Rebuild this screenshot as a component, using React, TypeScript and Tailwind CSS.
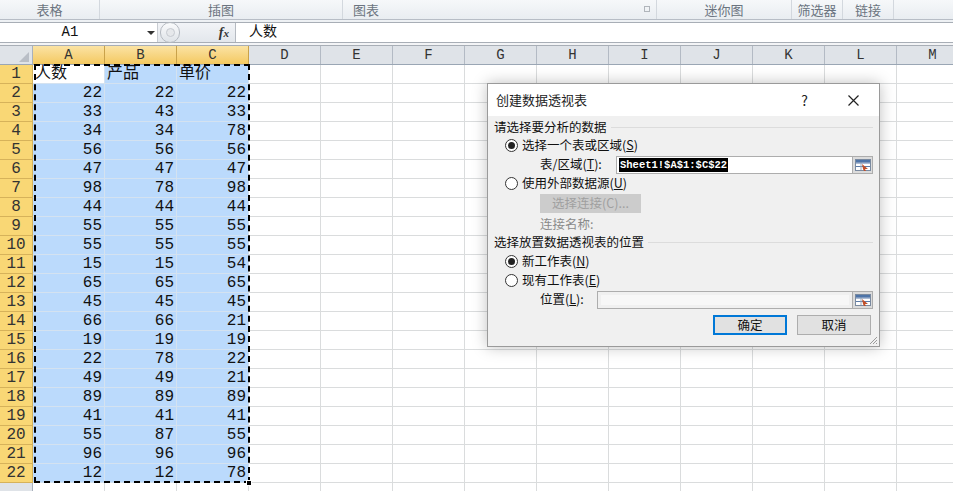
import React from 'react'

const cols = ['A', 'B', 'C', 'D', 'E', 'F', 'G', 'H', 'I', 'J', 'K', 'L', 'M']
const data: number[][] = [
  [22, 22, 22], [33, 43, 33], [34, 34, 78], [56, 56, 56], [47, 47, 47], [98, 78, 98],
  [44, 44, 44], [55, 55, 55], [55, 55, 55], [15, 15, 54], [65, 65, 65], [45, 45, 45],
  [66, 66, 21], [19, 19, 19], [22, 78, 22], [49, 49, 21], [89, 89, 89], [41, 41, 41],
  [55, 87, 55], [96, 96, 96], [12, 12, 78],
]
const cellFont = { fontFamily: '"Liberation Mono", "Noto Sans CJK SC", monospace' }
const uiFont = { fontFamily: '"Noto Sans CJK SC", "Noto Sans", sans-serif' }

const Radio = ({ on }: { on?: boolean }) => (
  <span className="w-[13px] h-[13px] rounded-full border border-[#333] bg-white flex items-center justify-center shrink-0">
    {on && <span className="w-[7px] h-[7px] rounded-full bg-[#222]" />}
  </span>
)

const PickBtn = () => (
  <div className="w-[20px] h-full bg-[#dcdcdc] border-l border-[#adadad] flex items-center justify-center">
    <svg width="16" height="12" viewBox="0 0 16 12">
      <rect x="0.5" y="0.5" width="15" height="11" fill="#fff" stroke="#7a8aa0" />
      <line x1="1" y1="4" x2="15" y2="4" stroke="#5c7ba8" />
      <line x1="1" y1="7.5" x2="15" y2="7.5" stroke="#5c7ba8" />
      <line x1="6" y1="1" x2="6" y2="11" stroke="#9aa8ba" />
      <rect x="1" y="1" width="14" height="2.5" fill="#4e74a8" />
      <path d="M7 5 L13 10 L10 10 L11 12 L9 12 L8 10 Z" fill="#c0502a" />
    </svg>
  </div>
)

const Header = () => (
  <div className="flex h-[19px] border-b border-[#9aa6b4]">
    <div className="w-[33px] shrink-0 bg-[#dfe3e8] border-r border-[#a9b1bc] relative">
      <svg className="absolute right-[3px] bottom-[2px]" width="10" height="10" viewBox="0 0 10 10">
        <path d="M10 0 L10 10 L0 10 Z" fill="#b9bec6" />
      </svg>
    </div>
    {cols.map((c, i) => (
      <div
        key={c}
        className={`w-[72px] shrink-0 flex items-center justify-center text-[14px] border-r ${
          i < 3
            ? 'bg-gradient-to-b from-[#fbe3a3] to-[#f4c95f] border-[#c9a24a] text-[#333]'
            : 'bg-[#dfe3e8] border-[#b3bac4] text-[#333]'
        }`}
        style={cellFont}
      >
        {c}
      </div>
    ))}
  </div>
)

export default function App() {
  const rows = [[0, 0, 0] as (number | string)[], ...data]
  return (
    <div className="w-[953px] h-[491px] overflow-hidden bg-white relative" style={uiFont}>
      {/* ribbon group labels */}
      <div className="flex h-[20px] bg-gradient-to-b from-[#f6f8fa] to-[#e9edf1] border-b border-[#b7bdc6] text-[13px] text-[#6b7480]">
        <div className="w-[100px] border-r border-[#d3d8de] flex items-center justify-center">表格</div>
        <div className="w-[243px] border-r border-[#d3d8de] flex items-center justify-center">插图</div>
        <div className="w-[314px] border-r border-[#d3d8de] flex items-center pl-[10px] relative">
          图表
          <span className="absolute right-[6px] top-[6px] w-[6px] h-[6px] border border-[#b0b5bb]" />
        </div>
        <div className="w-[135px] border-r border-[#d3d8de] flex items-center justify-center">迷你图</div>
        <div className="w-[51px] border-r border-[#d3d8de] flex items-center justify-center">筛选器</div>
        <div className="w-[51px] border-r border-[#d3d8de] flex items-center justify-center">链接</div>
        <div className="flex-1" />
      </div>
      {/* formula bar */}
      <div className="h-[2px] bg-[#eef1f4]" />
      <div className="flex h-[21px] bg-white border-y border-[#a8aeb6]">
        <div className="w-[158px] flex items-center relative border-r border-[#c8ccd2]">
          <span className="w-[140px] text-center text-[14px] text-[#111]" style={cellFont}>A1</span>
          <svg className="absolute left-[147px] top-[8px]" width="8" height="4" viewBox="0 0 8 4">
            <path d="M0 0 L8 0 L4 4 Z" fill="#333" />
          </svg>
        </div>
        <div className="w-[78px] flex items-center bg-gradient-to-b from-[#f2f4f7] to-[#e3e7ec] border-r border-[#b5bac1] relative">
          <span className="absolute left-[2px] top-[-1px] w-[20px] h-[21px] rounded-full border border-[#b5bac1] bg-gradient-to-b from-[#fafbfc] to-[#dfe3e8]">
            <span className="absolute left-[5px] top-[5px] w-[9px] h-[9px] rounded-full bg-[#e6e8eb] border border-[#c6cad0]" />
          </span>
          <span className="ml-auto mr-[6px] text-[14px] italic font-bold text-[#333]" style={{ fontFamily: '"Liberation Serif", serif' }}>
            f<span className="text-[11px]">x</span>
          </span>
        </div>
        <div className="flex-1 flex items-center pl-[13px] text-[14px] text-[#111]" style={cellFont}>人数</div>
      </div>
      <div className="h-[3px] bg-[#f3f4f6] border-b border-[#a8aeb6]" />
      {/* sheet */}
      <Header />
      <div className="relative">
        {rows.map((r, ri) => (
          <div key={ri} className="flex h-[19px]">
            <div
              className="w-[33px] shrink-0 flex items-center justify-center text-[16px] text-[#333] bg-[#f9d775] border-r border-b border-[#d6b25a]"
              style={cellFont}
            >
              {ri + 1}
            </div>
            {cols.map((c, ci) => {
              const sel = ci < 3 && !(ri === 0 && ci === 0)
              const inSel = ci < 3
              const head = ['人数', '产品', '单价'][ci]
              return (
                <div
                  key={c}
                  className={`w-[72px] shrink-0 flex items-center text-[16px] text-[#111] border-r border-b ${
                    sel ? 'bg-[#bbdafc]' : 'bg-white'
                  } ${inSel ? 'border-[#d4e2f0] justify-end pr-[2px]' : 'border-[#dadcdd]'} ${
                    ri === 0 ? 'justify-start pl-[2px]' : ''
                  }`}
                  style={cellFont}
                >
                  {inSel ? (ri === 0 ? head : r[ci]) : ''}
                </div>
              )
            })}
          </div>
        ))}
        <div className="flex h-[19px]">
          <div className="w-[33px] shrink-0 bg-[#dfe3e8] border-r border-[#a9b1bc]" />
          {cols.map((c) => (
            <div key={c} className="w-[72px] shrink-0 border-r border-[#dadcdd]" />
          ))}
        </div>
        {/* marching ants */}
        <div className="absolute left-[34px] top-[-1px] w-[216px] h-[419px] border-2 border-dashed border-black pointer-events-none" />
        <div className="absolute left-[246px] top-[415px] w-[6px] h-[6px] bg-black border border-white" />
      </div>

      {/* pivot dialog */}
      <div
        className="absolute left-[487px] top-[83px] w-[393px] h-[264px] bg-[#f0f0f0] border border-[#9a9a9a] shadow-[0_0_14px_rgba(0,0,0,0.25)] text-[12.5px] text-[#111] flex flex-col"
      >
        <div className="h-[32px] bg-white flex items-center pl-[8px] text-[13px] text-[#222]">
          <span>创建数据透视表</span>
          <span className="ml-auto mr-[40px] text-[14px]">?</span>
          <svg className="mr-[20px]" width="11" height="11" viewBox="0 0 11 11">
            <path d="M0.5 0.5 L10.5 10.5 M10.5 0.5 L0.5 10.5" stroke="#222" strokeWidth="1.2" />
          </svg>
        </div>
        <div className="flex flex-col px-[6px] pt-[3px]">
          <div className="flex items-center gap-[4px] h-[17px]">
            <span>请选择要分析的数据</span>
            <span className="flex-1 h-px bg-[#dcdcdc]" />
          </div>
          <div className="flex items-center gap-[4px] h-[19px] pl-[11px]">
            <Radio on />
            <span>选择一个表或区域(<u>S</u>)</span>
          </div>
          <div className="flex items-center h-[19px] pl-[46px]">
            <span className="w-[76px]">表/区域(<u>T</u>):</span>
            <div className="w-[257px] h-[18px] border border-[#adadad] bg-white flex items-center">
              <div className="flex-1 pl-[2px] flex items-center">
                <span className="bg-black text-white text-[10.5px] font-bold leading-[14px] px-[1px]" style={cellFont}>
                  Sheet1!$A$1:$C$22
                </span>
              </div>
              <PickBtn />
            </div>
          </div>
          <div className="flex items-center gap-[4px] h-[19px] pl-[11px]">
            <Radio />
            <span>使用外部数据源(<u>U</u>)</span>
          </div>
          <div className="pl-[46px] pt-[1px] h-[21px]">
            <div className="w-[101px] h-[19px] bg-[#cccccc] text-[#a0a0a0] flex items-center justify-center">
              选择连接(C)...
            </div>
          </div>
          <div className="pl-[46px] h-[20px] flex items-center text-[#8a8a8a]">连接名称:</div>
          <div className="flex items-center gap-[4px] h-[17px]">
            <span>选择放置数据透视表的位置</span>
            <span className="flex-1 h-px bg-[#dcdcdc]" />
          </div>
          <div className="flex items-center gap-[4px] h-[19px] pl-[11px] mt-[1px]">
            <Radio on />
            <span>新工作表(<u>N</u>)</span>
          </div>
          <div className="flex items-center gap-[4px] h-[18px] pl-[11px]">
            <Radio />
            <span>现有工作表(<u>E</u>)</span>
          </div>
          <div className="flex items-center h-[21px] pl-[46px]">
            <span className="w-[57px]">位置(<u>L</u>):</span>
            <div className="w-[276px] h-[18px] border border-[#adadad] bg-[#f4f4f4] flex items-center">
              <div className="flex-1 h-full border-[3px] border-[#f0f0f0] bg-[#f7f7f7]" />
              <PickBtn />
            </div>
          </div>
          <div className="flex justify-end gap-[10px] pr-[2px] mt-[5px]">
            <div className="w-[74px] h-[20px] border-2 border-[#0078d7] bg-[#e1e1e1] flex items-center justify-center">确定</div>
            <div className="w-[74px] h-[20px] border border-[#adadad] bg-[#e1e1e1] flex items-center justify-center">取消</div>
          </div>
        </div>
        <svg className="absolute right-[1px] bottom-[1px]" width="9" height="9" viewBox="0 0 9 9">
          <path d="M8 1 L1 8 M8 4 L4 8 M8 7 L7 8" stroke="#9a9a9a" strokeWidth="1" />
        </svg>
      </div>
    </div>
  )
}
